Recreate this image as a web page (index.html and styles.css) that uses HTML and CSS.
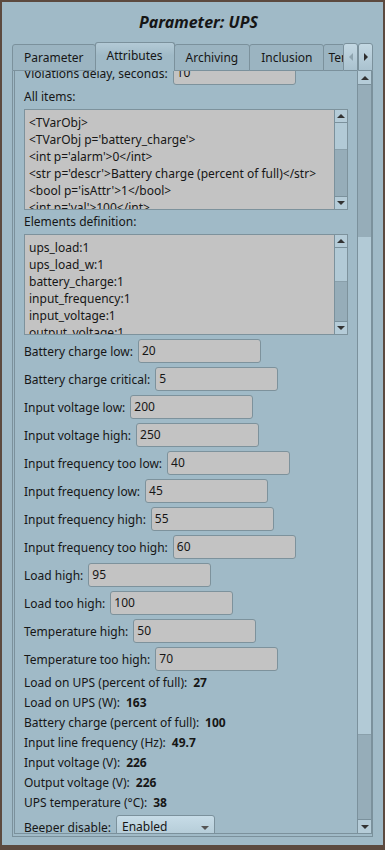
FILE: index.html
```html
<!DOCTYPE html>
<html lang="en">
<head>
  <meta charset="UTF-8" />
  <title>Parameter: UPS</title>
  <link rel="stylesheet" href="styles.css">
</head>
<body>

<div class="window">
  <div class="title">Parameter: UPS</div>

  <!-- Tab strip -->
  <div class="tabbar">
    <div class="tabs">
      <div class="tab">Parameter</div>
      <div class="tab active">Attributes</div>
      <div class="tab">Archiving</div>
      <div class="tab">Inclusion</div>
      <div class="tab clip">Template</div>
    </div>
    <div class="tab-btn disabled"><span class="tri-left"></span></div>
    <div class="tab-btn"><span class="tri-right"></span></div>
  </div>

  <!-- Attributes page -->
  <div class="pane">
    <div class="frame">
      <div class="view">
        <div class="form">

          <div class="field">
            <span>Violations delay, seconds:</span>
            <div class="input">10</div>
          </div>

          <div class="caption">All items:</div>
          <div class="textbox">
            <div class="lines">
              <div>&lt;TVarObj&gt;</div>
              <div>&lt;TVarObj p='battery_charge'&gt;</div>
              <div>&lt;int p='alarm'&gt;0&lt;/int&gt;</div>
              <div>&lt;str p='descr'&gt;Battery charge (percent of full)&lt;/str&gt;</div>
              <div>&lt;bool p='isAttr'&gt;1&lt;/bool&gt;</div>
              <div>&lt;int p='val'&gt;100&lt;/int&gt;</div>
            </div>
            <div class="mini-scroll">
              <div class="arrow-box"><span class="tri-up"></span></div>
              <div class="handle" style="height: 27px"></div>
              <div class="trough"></div>
              <div class="arrow-box down"><span class="tri-down"></span></div>
            </div>
          </div>

          <div class="caption">Elements definition:</div>
          <div class="textbox">
            <div class="lines">
              <div>ups_load:1</div>
              <div>ups_load_w:1</div>
              <div>battery_charge:1</div>
              <div>input_frequency:1</div>
              <div>input_voltage:1</div>
              <div>output_voltage:1</div>
            </div>
            <div class="mini-scroll">
              <div class="arrow-box"><span class="tri-up"></span></div>
              <div class="handle" style="height: 34px"></div>
              <div class="trough"></div>
              <div class="arrow-box down"><span class="tri-down"></span></div>
            </div>
          </div>

          <div class="field"><span>Battery charge low:</span><div class="input">20</div></div>
          <div class="field"><span>Battery charge critical:</span><div class="input">5</div></div>
          <div class="field"><span>Input voltage low:</span><div class="input">200</div></div>
          <div class="field"><span>Input voltage high:</span><div class="input">250</div></div>
          <div class="field"><span>Input frequency too low:</span><div class="input">40</div></div>
          <div class="field"><span>Input frequency low:</span><div class="input">45</div></div>
          <div class="field"><span>Input frequency high:</span><div class="input">55</div></div>
          <div class="field"><span>Input frequency too high:</span><div class="input">60</div></div>
          <div class="field"><span>Load high:</span><div class="input">95</div></div>
          <div class="field"><span>Load too high:</span><div class="input">100</div></div>
          <div class="field"><span>Temperature high:</span><div class="input">50</div></div>
          <div class="field"><span>Temperature too high:</span><div class="input">70</div></div>

          <div class="info"><span>Load on UPS (percent of full):</span><b>27</b></div>
          <div class="info"><span>Load on UPS (W):</span><b>163</b></div>
          <div class="info"><span>Battery charge (percent of full):</span><b>100</b></div>
          <div class="info"><span>Input line frequency (Hz):</span><b>49.7</b></div>
          <div class="info"><span>Input voltage (V):</span><b>226</b></div>
          <div class="info"><span>Output voltage (V):</span><b>226</b></div>
          <div class="info"><span>UPS temperature (°C):</span><b>38</b></div>

          <div class="field">
            <span>Beeper disable:</span>
            <div class="combo">Enabled<span class="tri-down"></span></div>
          </div>

        </div>
      </div>

      <!-- page scrollbar -->
      <div class="vscroll">
        <div class="arrow-box big"><span class="tri-up"></span></div>
        <div class="trough" style="flex: 0 0 152px"></div>
        <div class="handle" style="height: 498px"></div>
        <div class="trough"></div>
        <div class="arrow-box big down"><span class="tri-down"></span></div>
      </div>
    </div>
  </div>
</div>

</body>
</html>
```

FILE: styles.css
```css
* {
  box-sizing: border-box;
}

body {
  margin: 0;
  background: #5c4a3f;
  font-family: "Noto Sans", sans-serif;
  font-size: 12px;
  color: #161616;
}

.window {
  height: 850px;
  display: flex;
  flex-direction: column;
  background: #a0bac7;
  border: 2px solid #5c4a3f;
  border-bottom-width: 5px;
  padding-bottom: 8px;
}

.title {
  height: 40px;
  line-height: 40px;
  text-align: center;
  padding-left: 12px;
  font-size: 16px;
  font-weight: bold;
  font-style: italic;
}

/* tabs */
.tabbar {
  height: 29px;
  margin: 0 10px;
  display: flex;
  align-items: flex-end;
}

.tabs {
  flex: 1;
  height: 100%;
  display: flex;
  align-items: flex-end;
  overflow: hidden;
}

.tab {
  flex-shrink: 0;
  height: 27px;
  line-height: 25px;
  padding: 0 11px;
  white-space: nowrap;
  background: #9bb4c1;
  border: 1px solid #7b919c;
  border-radius: 3px 3px 0 0;
  margin-right: -1px;
}

.tab.active {
  height: 29px;
  position: relative;
  border-bottom: 0;
  background: linear-gradient(#b3cad6, #a0bac7 45%);
}

.tab.clip {
  padding-left: 4px;
}

.tab-btn {
  width: 15px;
  height: 28px;
  display: flex;
  align-items: center;
  justify-content: center;
  background: linear-gradient(#c3d8e3, #aac2cf);
  border: 1px solid #7b919c;
  border-radius: 3px 3px 0 0;
}

.tri-left {
  border-top: 4px solid transparent;
  border-bottom: 4px solid transparent;
  border-right: 4px solid #8ea4af;
}

.tri-right {
  border-top: 4px solid transparent;
  border-bottom: 4px solid transparent;
  border-left: 4px solid #2e2e2e;
}

.tri-up {
  border-left: 4px solid transparent;
  border-right: 4px solid transparent;
  border-bottom: 4px solid #333;
}

.tri-down {
  border-left: 4px solid transparent;
  border-right: 4px solid transparent;
  border-top: 4px solid #333;
}

/* page */
.pane {
  flex: 1;
  min-height: 0;
  margin: 0 10px;
  display: flex;
  border: 1px solid #7b919c;
  border-top: 0;
  padding: 0 0 2px 1px;
}

.frame {
  flex: 1;
  min-height: 0;
  display: flex;
  border-left: 1px solid #7b919c;
  border-bottom: 1px solid #7b919c;
}

.view {
  flex: 1;
  overflow: hidden;
}

.form {
  margin-top: -10px;
  padding: 0 9px;
  display: flex;
  flex-direction: column;
  gap: 4px;
}

.field {
  height: 24px;
  flex-shrink: 0;
  display: flex;
  align-items: center;
  gap: 5px;
  white-space: nowrap;
}

.input {
  width: 123px;
  height: 24px;
  line-height: 22px;
  padding: 0 3px;
  background: #c3c3c3;
  border: 1px solid #7d929c;
  border-radius: 3px;
}

.caption {
  height: 16px;
  line-height: 16px;
  flex-shrink: 0;
}

.info {
  height: 16px;
  line-height: 16px;
  flex-shrink: 0;
  display: flex;
  gap: 6px;
  white-space: nowrap;
}

.textbox {
  height: 101px;
  flex-shrink: 0;
  display: flex;
  background: #c3c3c3;
  border: 1px solid #7d929c;
}

.lines {
  flex: 1;
  overflow: hidden;
  padding: 4px 4px 0;
  line-height: 17px;
}

.lines div {
  white-space: nowrap;
}

.mini-scroll, .vscroll {
  display: flex;
  flex-direction: column;
  background: #96adb9;
  border-left: 1px solid #7b919c;
}

.mini-scroll {
  width: 13px;
}

.vscroll {
  width: 15px;
  border-right: 1px solid #7b919c;
}

.arrow-box {
  height: 13px;
  flex-shrink: 0;
  display: flex;
  align-items: center;
  justify-content: center;
  background: #b5ccd8;
  border-bottom: 1px solid #7b919c;
}

.arrow-box.big {
  height: 14px;
}

.arrow-box.down {
  border-bottom: 0;
  border-top: 1px solid #7b919c;
}

.handle {
  flex-shrink: 0;
  background: #b2cad6;
  border-bottom: 1px solid #8aa0ab;
}

.trough {
  flex: 1;
}

.combo {
  width: 99px;
  height: 24px;
  line-height: 22px;
  padding: 0 5px;
  display: flex;
  align-items: center;
  justify-content: space-between;
  background: linear-gradient(#c7dce7, #b1c9d5);
  border: 1px solid #7b919c;
  border-radius: 3px;
}

.combo .tri-down {
  border-top-color: #555;
  margin-top: 2px;
}
```
